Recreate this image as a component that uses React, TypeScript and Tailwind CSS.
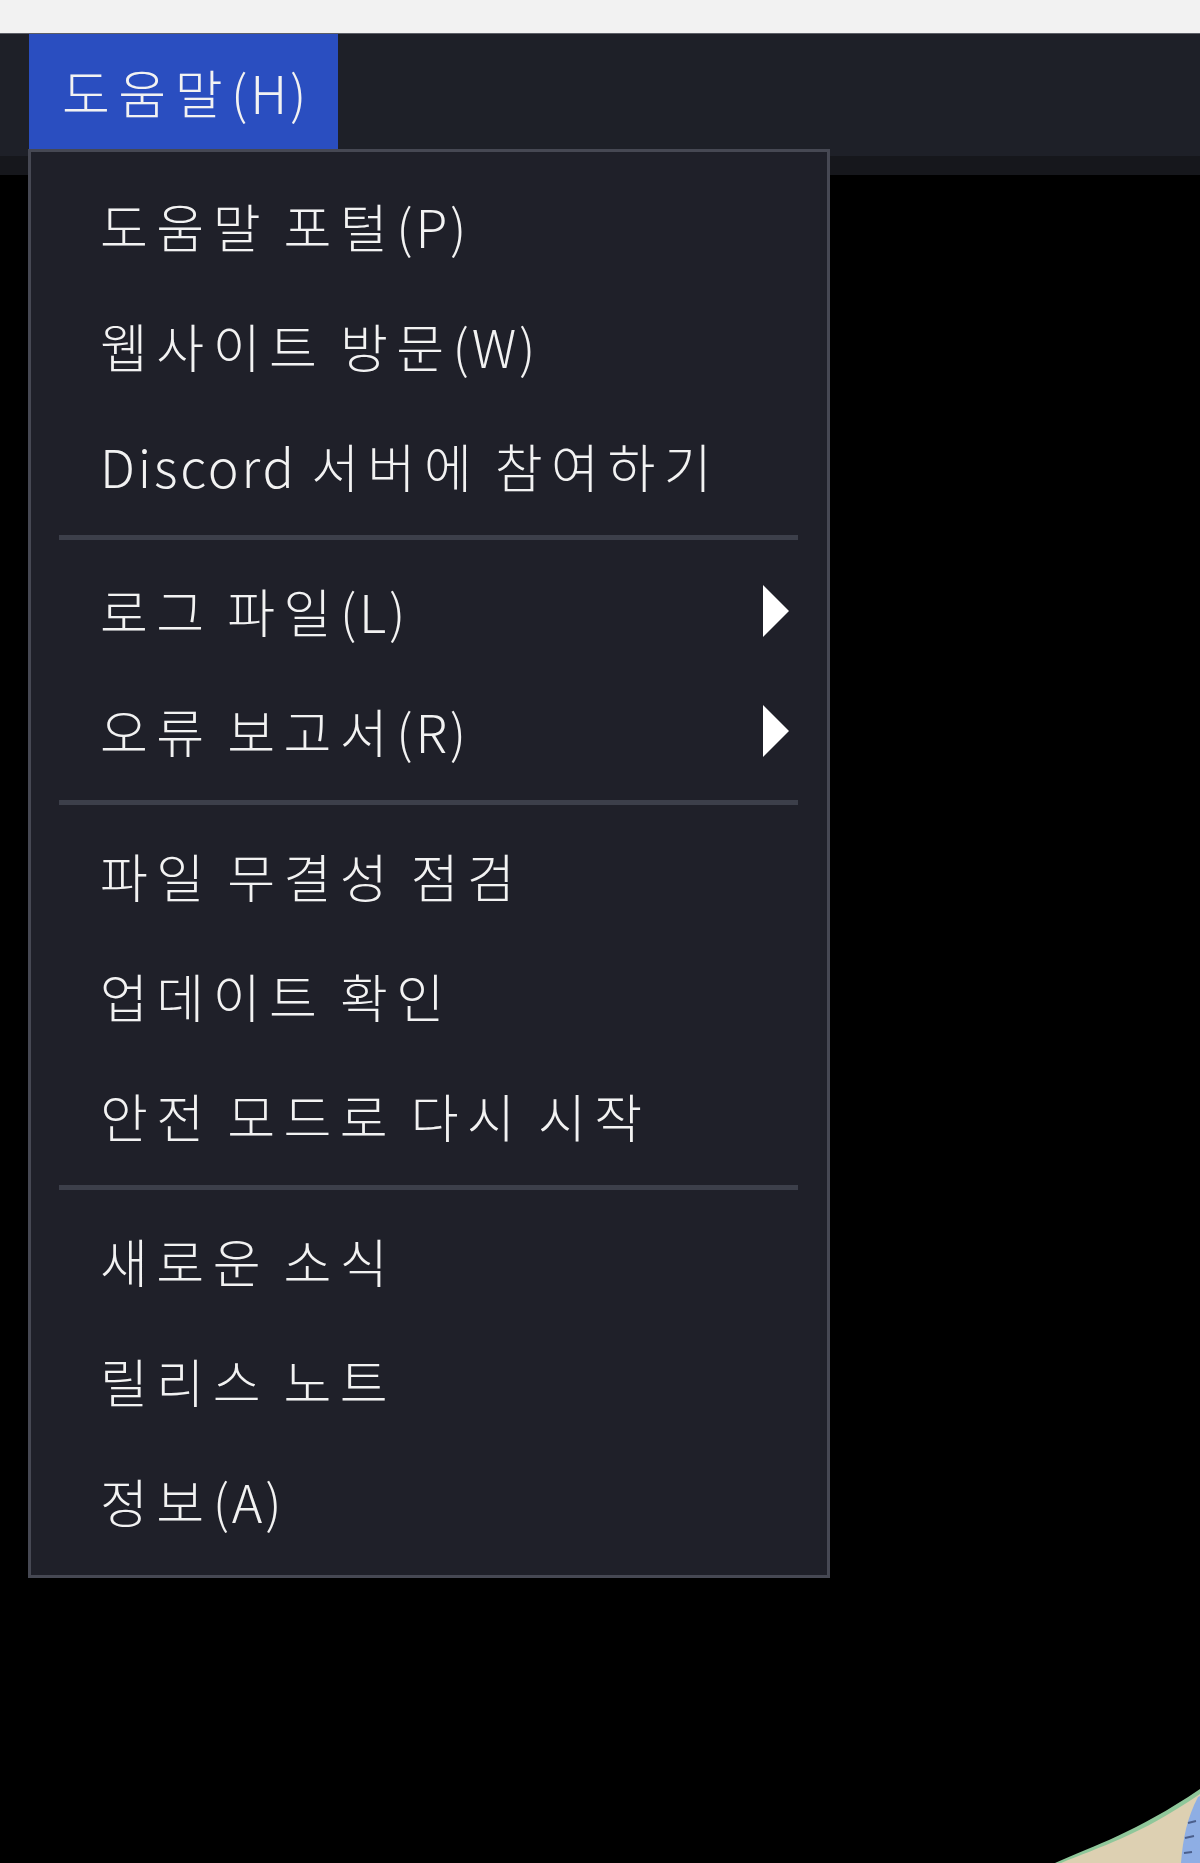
import React from 'react'

type Entry = { label: string; sub?: boolean } | 'sep'

const entries: Entry[] = [
  { label: '도움말 포털(P)' },
  { label: '웹사이트 방문(W)' },
  { label: 'Discord 서버에 참여하기' },
  'sep',
  { label: '로그 파일(L)', sub: true },
  { label: '오류 보고서(R)', sub: true },
  'sep',
  { label: '파일 무결성 점검' },
  { label: '업데이트 확인' },
  { label: '안전 모드로 다시 시작' },
  'sep',
  { label: '새로운 소식' },
  { label: '릴리스 노트' },
  { label: '정보(A)' },
]

// hangul runs sit wider than the latin bits in the original UI font
function Label({ text }: { text: string }) {
  const parts = text.split(/([!-~]+| +)/).filter(Boolean)
  return (
    <span className="whitespace-pre">
      {parts.map((p, i) => {
        if (/^ +$/.test(p)) return <span key={i} className="tracking-[3px]">{p}</span>
        if (/^[!-~]+$/.test(p)) return <span key={i} className="tracking-[2.8px]">{p}</span>
        return <span key={i} className="tracking-[8.5px]">{p}</span>
      })}
    </span>
  )
}

function SubArrow() {
  return (
    <svg width="28" height="52" viewBox="0 0 28 52" className="shrink-0">
      <polygon points="1,0 27,26 1,52" fill="#ffffff" />
    </svg>
  )
}

function CanvasCorner() {
  // bit of the scene peeking in at the bottom right
  return (
    <svg
      className="absolute bottom-0 right-0"
      width="145"
      height="80"
      viewBox="0 0 145 80"
    >
      <path d="M0,80 C40,62 80,50 145,6 L145,80 Z" fill="#8fc79a" />
      <path d="M6,80 C44,64 84,53 145,11 L145,80 Z" fill="#ddd0b2" />
      <path d="M126,80 C128,55 132,35 143,14 L145,13 L145,80 Z" fill="#8eaee4" />
      <path d="M133,40 l8,-2 M130,55 l9,-2 M129,70 l8,-1" stroke="#4b5f8c" strokeWidth="2" />
    </svg>
  )
}

export default function App() {
  return (
    <div
      className="relative flex h-[1863px] w-[1200px] flex-col overflow-hidden bg-black text-[#f2f2f2]"
      style={{ fontFamily: '"Noto Sans CJK KR", "Noto Sans", sans-serif' }}
    >
      <div className="h-[34px] shrink-0 border-b border-[#5c5e66] bg-[#f2f2f2]" />
      <div className="flex h-[122px] shrink-0 items-start bg-[#1e2028] pl-[29px]">
        <div className="flex h-[115px] w-[309px] items-center bg-[#2a4ec0] pl-[33px] text-[52px] font-light leading-none">
          <Label text="도움말(H)" />
        </div>
      </div>
      <div className="h-[19px] shrink-0 bg-[#16171c]" />
      <div className="relative flex-1">
        <CanvasCorner />
      </div>

      <div className="absolute left-[28px] top-[149px] w-[802px] border-[3px] border-[#464853] bg-[#1f2029] pb-[14px] pt-[14px]">
        {entries.map((e, i) =>
          e === 'sep' ? (
            <div key={i} className="mb-[11px] ml-[28px] mr-[29px] mt-[9px] h-[5px] bg-[#3c3f4a]" />
          ) : (
            <div
              key={i}
              className="flex h-[120px] items-center justify-between pl-[69px] pr-[37px] text-[52px] font-light leading-none"
            >
              <Label text={e.label} />
              {e.sub && <SubArrow />}
            </div>
          )
        )}
      </div>
    </div>
  )
}
